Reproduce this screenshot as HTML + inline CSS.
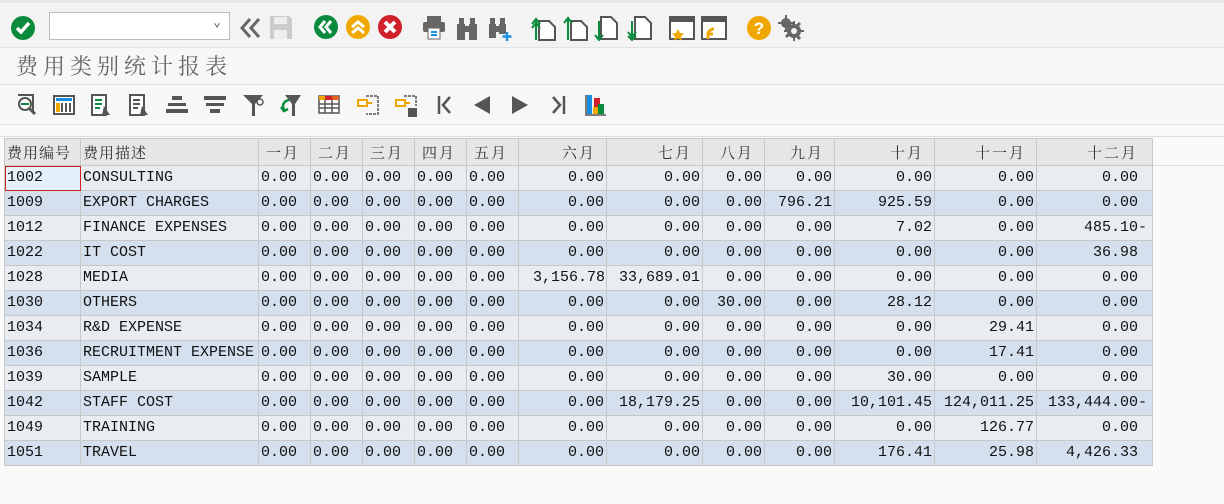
<!DOCTYPE html>
<html><head><meta charset="utf-8"><style>
*{margin:0;padding:0;box-sizing:border-box}
body{width:1224px;height:504px;background:#fafafa;position:relative;overflow:hidden;font-family:"Liberation Mono","Noto Sans CJK SC",monospace}
.bar1{position:absolute;left:0;top:0;width:1224px;height:48px;background:#f3f3f3;border-top:3px solid #e8e8e8;border-bottom:1px solid #e2e2e2}
.bar2{position:absolute;left:0;top:48px;width:1224px;height:37px;background:#f7f7f7;border-bottom:1px solid #e2e2e2}
.bar3{position:absolute;left:0;top:85px;width:1224px;height:40px;background:#f7f7f7;border-bottom:1px solid #e2e2e2}
.title{position:absolute;left:16px;top:50px;font:22px "Noto Serif CJK SC",serif;letter-spacing:5px;color:#666}
.ic{position:absolute}
table{position:absolute;left:4px;top:138px;border-collapse:collapse;font-size:15px;color:#111}
td{height:25px;border:1px solid #c8c8c8;padding:0 2px;white-space:nowrap;line-height:22px}
tr.h td{background:#e6e6e6;font-family:"Noto Serif CJK SC",serif;font-size:15px;color:#333;height:27px;letter-spacing:2px;line-height:25px}
tr.h td.r{padding-right:10px}
tr.o td{background:#e9edf1}
tr.e td{background:#d5e0ef}
td.r{text-align:right}
.topline{position:absolute;left:0;top:136px;width:1224px;height:1px;background:#ddd}
.hl{position:absolute;left:1152px;top:165px;width:72px;height:1px;background:#ddd}
</style></head><body>
<div class="bar1"></div><div class="bar2"></div><div class="bar3"></div>
<div class="topline"></div><div class="hl"></div>
<svg class="ic" style="left:10px;top:15px" width="26" height="26"><circle cx="13" cy="13" r="12" fill="#0a8a3c"/><path d="M7 13l4 4 8-9" stroke="#fff" stroke-width="3.5" fill="none"/></svg>
<div class="ic" style="left:49px;top:12px;width:181px;height:28px;background:#fff;border:1px solid #bbb"><span style="position:absolute;right:8px;top:2px;font-size:13px;color:#555">⌄</span></div>
<svg class="ic" style="left:238px;top:16px" width="26" height="24"><path d="M12 3l-8 9 8 9M21 3l-8 9 8 9" stroke="#666" stroke-width="3" fill="none"/></svg>
<svg class="ic" style="left:269px;top:15px" width="24" height="25"><path d="M1 1h19l3 3v20H1z" fill="#ccc"/><rect x="5" y="2" width="13" height="7" fill="#eee"/><rect x="5" y="15" width="13" height="9" fill="#eee"/></svg>
<svg class="ic" style="left:314px;top:15px" width="24" height="24"><circle cx="12" cy="12" r="12" fill="#0a8a3c"/><path d="M11 6l-5 6 5 6M17 6l-5 6 5 6" stroke="#fff" stroke-width="3" fill="none"/></svg>
<svg class="ic" style="left:346px;top:15px" width="24" height="24"><circle cx="12" cy="12" r="12" fill="#f0a800"/><path d="M6 12l6-5 6 5M6 18l6-5 6 5" stroke="#fff" stroke-width="3" fill="none"/></svg>
<svg class="ic" style="left:378px;top:15px" width="24" height="24"><circle cx="12" cy="12" r="12" fill="#d0202a"/><path d="M7 7l10 10M17 7L7 17" stroke="#fff" stroke-width="4"/></svg>
<svg class="ic" style="left:422px;top:15px" width="24" height="26"><rect x="5" y="1" width="14" height="6" fill="#666"/><rect x="1" y="7" width="22" height="10" rx="2" fill="#666"/><rect x="6" y="13" width="12" height="11" fill="#fff" stroke="#666"/><path d="M9 17h6M9 20h6" stroke="#1a8ee0" stroke-width="2"/></svg>
<svg class="ic" style="left:455px;top:16px" width="24" height="24"><path d="M2 8h8v16H2zM14 8h8v16h-8zM4 2h5v6H4zM15 2h5v6h-5zM9 10h6v6H9z" fill="#666"/></svg>
<svg class="ic" style="left:487px;top:16px" width="26" height="26"><path d="M2 8h7v14H2zM12 8h7v10h-7zM3 2h5v6H3zM13 2h5v6h-5zM8 10h5v6H8z" fill="#666"/><path d="M20 16v9M15.5 20.5h9" stroke="#1a8ee0" stroke-width="2.4"/></svg>
<svg class="ic" style="left:530px;top:15px" width="26" height="26"><path d="M9 6h10l6 6v13H9z" fill="#fff" stroke="#555" stroke-width="2"/><path d="M6 25V5M2 9l4-5 4 5M2 13l4-5 4 5" stroke="#0a8a3c" stroke-width="2" fill="none"/></svg>
<svg class="ic" style="left:562px;top:15px" width="26" height="26"><path d="M9 6h10l6 6v13H9z" fill="#fff" stroke="#555" stroke-width="2"/><path d="M6 25V3M2 8l4-5 4 5" stroke="#0a8a3c" stroke-width="2" fill="none"/></svg>
<svg class="ic" style="left:594px;top:15px" width="26" height="26"><path d="M7 2h10l6 6v16H7z" fill="#fff" stroke="#555" stroke-width="2"/><path d="M5 6v19M1 20l4 5 4-5" stroke="#0a8a3c" stroke-width="2" fill="none"/></svg>
<svg class="ic" style="left:626px;top:15px" width="26" height="26"><path d="M9 2h10l6 6v16H9z" fill="#fff" stroke="#555" stroke-width="2"/><path d="M6 6v19M2 17l4 5 4-5M2 21l4 4 4-4" stroke="#0a8a3c" stroke-width="2" fill="none"/></svg>
<svg class="ic" style="left:668px;top:15px" width="28" height="26"><path d="M2 2h24v22H2z" fill="#fff" stroke="#555" stroke-width="2"/><rect x="2" y="2" width="24" height="5" fill="#555"/><path d="M10 14l2 4 4 .5-3 3 1 4-4-2-4 2 1-4-3-3 4-.5z" fill="#f0a800"/></svg>
<svg class="ic" style="left:700px;top:15px" width="28" height="26"><path d="M2 2h24v22H2z" fill="#fff" stroke="#555" stroke-width="2"/><rect x="2" y="2" width="24" height="5" fill="#555"/><path d="M8 24v-5h5M8 19a6 6 0 0 1 6-5" stroke="#f0a800" stroke-width="3" fill="none"/></svg>
<svg class="ic" style="left:746px;top:15px" width="26" height="26"><circle cx="13" cy="13" r="12" fill="#f0a800"/><text x="13" y="19" font-family="Liberation Sans" font-weight="bold" font-size="17" fill="#fff" text-anchor="middle">?</text></svg>
<svg class="ic" style="left:778px;top:15px" width="26" height="26"><g fill="#666"><circle cx="8" cy="8" r="5"/><circle cx="16" cy="16" r="7"/><path d="M7 0h2v16H7zM0 7h16v2H0zM15 6h2v20h-2zM6 15h20v2H6zM9 9l14 14-2 2L7 11zM23 9L9 23l-2-2L21 7z"/></g><circle cx="16" cy="16" r="3" fill="#f3f3f3"/></svg>
<div class="title">费用类别统计报表</div>
<svg class="ic" style="left:16px;top:94px" width="22" height="22"><path d="M2 1h15v16" fill="none" stroke="#555" stroke-width="2"/><circle cx="9" cy="10" r="6" fill="#fff" stroke="#555" stroke-width="2"/><path d="M5 10h8" stroke="#0a8a3c" stroke-width="2"/><path d="M13 14l6 6" stroke="#555" stroke-width="3"/></svg>
<svg class="ic" style="left:53px;top:95px" width="22" height="20"><rect x="1" y="1" width="20" height="18" fill="#fff" stroke="#555" stroke-width="2"/><rect x="3" y="3" width="16" height="3" fill="#1a8ee0"/><rect x="3" y="8" width="4" height="9" fill="#f0a800"/><path d="M9 8v9M13 8v9M17 8v9" stroke="#555" stroke-width="2"/></svg>
<svg class="ic" style="left:90px;top:94px" width="22" height="22"><path d="M2 1h14v20H2z" fill="#fff" stroke="#555" stroke-width="2"/><path d="M5 6h7M5 10h7M5 14h5" stroke="#0a8a3c" stroke-width="2"/><path d="M14 12l6 9h-8z" fill="#555"/></svg>
<svg class="ic" style="left:128px;top:94px" width="22" height="22"><path d="M2 1h14v20H2z" fill="#fff" stroke="#555" stroke-width="2"/><path d="M5 6h7M5 10h7M5 14h5" stroke="#555" stroke-width="2"/><path d="M14 12l6 9h-8z" fill="#555"/></svg>
<svg class="ic" style="left:166px;top:96px" width="22" height="18"><rect x="6" y="0" width="10" height="4" fill="#555"/><rect x="2" y="7" width="18" height="3" fill="#555"/><rect x="0" y="13" width="22" height="4" fill="#555"/></svg>
<svg class="ic" style="left:204px;top:96px" width="22" height="18"><rect x="0" y="0" width="22" height="4" fill="#555"/><rect x="2" y="7" width="18" height="3" fill="#555"/><rect x="6" y="13" width="10" height="4" fill="#555"/></svg>
<svg class="ic" style="left:242px;top:94px" width="22" height="22"><path d="M1 1h20l-8 9v12h-3V10z" fill="#555"/><circle cx="18" cy="8" r="3" fill="none" stroke="#555" stroke-width="1.5"/></svg>
<svg class="ic" style="left:280px;top:94px" width="22" height="22"><path d="M5 1h16l-6 9v12h-3V10z" fill="#555"/><path d="M9 6c-6 1-7 6-5 10M1 13l3 4 4-2" stroke="#0a8a3c" stroke-width="2.5" fill="none"/></svg>
<svg class="ic" style="left:318px;top:95px" width="22" height="20"><rect x="1" y="1" width="20" height="17" fill="#fff" stroke="#555" stroke-width="1.5"/><rect x="1" y="1" width="6" height="4" fill="#f0a800"/><rect x="7" y="1" width="7" height="4" fill="#d0202a"/><rect x="14" y="1" width="7" height="4" fill="#e06020"/><path d="M1 9h20M1 13h20M7 5v13M14 5v13" stroke="#555" stroke-width="1.5"/></svg>
<svg class="ic" style="left:356px;top:94px" width="24" height="22"><path d="M10 2h12v18h-12" fill="none" stroke="#555" stroke-width="1.5" stroke-dasharray="3 1"/><rect x="2" y="6" width="9" height="6" fill="#fff" stroke="#f0a800" stroke-width="2"/><path d="M11 9h5" stroke="#f0a800" stroke-width="2"/></svg>
<svg class="ic" style="left:394px;top:94px" width="24" height="24"><path d="M10 2h12v10" fill="none" stroke="#555" stroke-width="1.5" stroke-dasharray="3 1"/><rect x="2" y="6" width="9" height="6" fill="#fff" stroke="#f0a800" stroke-width="2"/><path d="M11 9h5" stroke="#f0a800" stroke-width="2"/><rect x="14" y="14" width="9" height="9" fill="#555"/></svg>
<svg class="ic" style="left:437px;top:95px" width="16" height="20"><path d="M2 1v18" stroke="#555" stroke-width="2.5"/><path d="M13 2l-7 8 7 8" stroke="#555" stroke-width="2.5" fill="none"/></svg>
<svg class="ic" style="left:472px;top:95px" width="20" height="20"><path d="M18 1v18L2 10z" fill="#555"/></svg>
<svg class="ic" style="left:510px;top:95px" width="20" height="20"><path d="M2 1v18l16-9z" fill="#555"/></svg>
<svg class="ic" style="left:550px;top:95px" width="16" height="20"><path d="M14 1v18" stroke="#555" stroke-width="2.5"/><path d="M3 2l7 8-7 8" stroke="#555" stroke-width="2.5" fill="none"/></svg>
<svg class="ic" style="left:585px;top:94px" width="22" height="22"><path d="M1 1v20h20" stroke="#555" stroke-width="1.5" fill="none"/><rect x="2" y="1" width="5" height="19" fill="#1a8ee0"/><rect x="9" y="4" width="6" height="10" fill="#d0202a"/><rect x="8" y="13" width="5" height="7" fill="#f0a800"/><rect x="13" y="10" width="6" height="10" fill="#0a8a3c"/></svg>

<table>
<colgroup><col style="width:76px"><col style="width:178px"><col style="width:52px"><col style="width:52px"><col style="width:52px"><col style="width:52px"><col style="width:52px"><col style="width:88px"><col style="width:96px"><col style="width:62px"><col style="width:70px"><col style="width:100px"><col style="width:102px"><col style="width:116px"></colgroup>
<tr class="h"><td style="letter-spacing:1px">费用编号</td><td style="letter-spacing:1px">费用描述</td><td class="r">一月</td><td class="r">二月</td><td class="r">三月</td><td class="r">四月</td><td class="r">五月</td><td class="r">六月</td><td class="r">七月</td><td class="r">八月</td><td class="r">九月</td><td class="r">十月</td><td class="r">十一月</td><td class="r" style="padding-right:14px">十二月</td></tr>
<tr class="o"><td style="background:#e4f0fa;outline:1px solid #d02020;outline-offset:-1px">1002</td><td>CONSULTING</td><td>0.00</td><td>0.00</td><td>0.00</td><td>0.00</td><td>0.00</td><td class="r">0.00</td><td class="r">0.00</td><td class="r">0.00</td><td class="r">0.00</td><td class="r">0.00</td><td class="r">0.00</td><td class="r" style="padding-right:14px">0.00</td></tr>
<tr class="e"><td>1009</td><td>EXPORT CHARGES</td><td>0.00</td><td>0.00</td><td>0.00</td><td>0.00</td><td>0.00</td><td class="r">0.00</td><td class="r">0.00</td><td class="r">0.00</td><td class="r">796.21</td><td class="r">925.59</td><td class="r">0.00</td><td class="r" style="padding-right:14px">0.00</td></tr>
<tr class="o"><td>1012</td><td>FINANCE EXPENSES</td><td>0.00</td><td>0.00</td><td>0.00</td><td>0.00</td><td>0.00</td><td class="r">0.00</td><td class="r">0.00</td><td class="r">0.00</td><td class="r">0.00</td><td class="r">7.02</td><td class="r">0.00</td><td class="r" style="padding-right:5px">485.10-</td></tr>
<tr class="e"><td>1022</td><td>IT COST</td><td>0.00</td><td>0.00</td><td>0.00</td><td>0.00</td><td>0.00</td><td class="r">0.00</td><td class="r">0.00</td><td class="r">0.00</td><td class="r">0.00</td><td class="r">0.00</td><td class="r">0.00</td><td class="r" style="padding-right:14px">36.98</td></tr>
<tr class="o"><td>1028</td><td>MEDIA</td><td>0.00</td><td>0.00</td><td>0.00</td><td>0.00</td><td>0.00</td><td class="r" style="padding:0 1px">3,156.78</td><td class="r">33,689.01</td><td class="r">0.00</td><td class="r">0.00</td><td class="r">0.00</td><td class="r">0.00</td><td class="r" style="padding-right:14px">0.00</td></tr>
<tr class="e"><td>1030</td><td>OTHERS</td><td>0.00</td><td>0.00</td><td>0.00</td><td>0.00</td><td>0.00</td><td class="r">0.00</td><td class="r">0.00</td><td class="r">30.00</td><td class="r">0.00</td><td class="r">28.12</td><td class="r">0.00</td><td class="r" style="padding-right:14px">0.00</td></tr>
<tr class="o"><td>1034</td><td>R&amp;D EXPENSE</td><td>0.00</td><td>0.00</td><td>0.00</td><td>0.00</td><td>0.00</td><td class="r">0.00</td><td class="r">0.00</td><td class="r">0.00</td><td class="r">0.00</td><td class="r">0.00</td><td class="r">29.41</td><td class="r" style="padding-right:14px">0.00</td></tr>
<tr class="e"><td>1036</td><td>RECRUITMENT EXPENSE</td><td>0.00</td><td>0.00</td><td>0.00</td><td>0.00</td><td>0.00</td><td class="r">0.00</td><td class="r">0.00</td><td class="r">0.00</td><td class="r">0.00</td><td class="r">0.00</td><td class="r">17.41</td><td class="r" style="padding-right:14px">0.00</td></tr>
<tr class="o"><td>1039</td><td>SAMPLE</td><td>0.00</td><td>0.00</td><td>0.00</td><td>0.00</td><td>0.00</td><td class="r">0.00</td><td class="r">0.00</td><td class="r">0.00</td><td class="r">0.00</td><td class="r">30.00</td><td class="r">0.00</td><td class="r" style="padding-right:14px">0.00</td></tr>
<tr class="e"><td>1042</td><td>STAFF COST</td><td>0.00</td><td>0.00</td><td>0.00</td><td>0.00</td><td>0.00</td><td class="r">0.00</td><td class="r">18,179.25</td><td class="r">0.00</td><td class="r">0.00</td><td class="r">10,101.45</td><td class="r">124,011.25</td><td class="r" style="padding-right:5px">133,444.00-</td></tr>
<tr class="o"><td>1049</td><td>TRAINING</td><td>0.00</td><td>0.00</td><td>0.00</td><td>0.00</td><td>0.00</td><td class="r">0.00</td><td class="r">0.00</td><td class="r">0.00</td><td class="r">0.00</td><td class="r">0.00</td><td class="r">126.77</td><td class="r" style="padding-right:14px">0.00</td></tr>
<tr class="e"><td>1051</td><td>TRAVEL</td><td>0.00</td><td>0.00</td><td>0.00</td><td>0.00</td><td>0.00</td><td class="r">0.00</td><td class="r">0.00</td><td class="r">0.00</td><td class="r">0.00</td><td class="r">176.41</td><td class="r">25.98</td><td class="r" style="padding-right:14px">4,426.33</td></tr>
</table>
</body></html>
